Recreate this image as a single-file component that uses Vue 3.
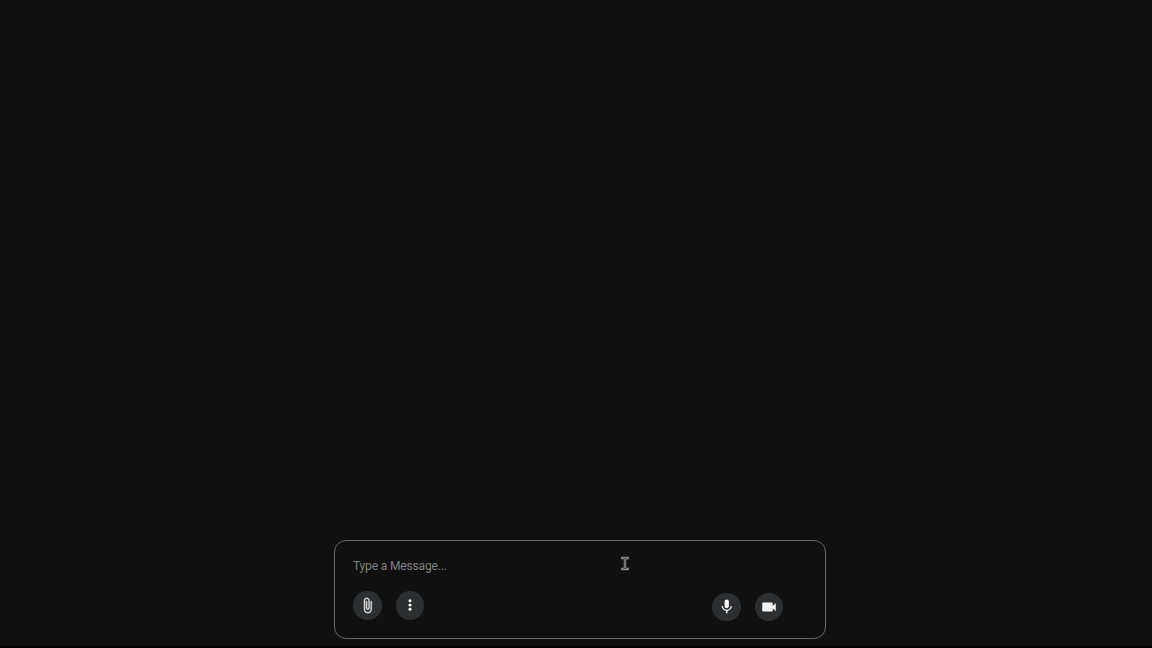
<script setup>
import { ref } from "vue";
const message = ref("");
</script>

<template>
  <div class="page">
    <main class="chat"></main>
    <div class="composer">
      <input
        v-model="message"
        class="message"
        type="text"
        placeholder="Type a Message..."
      />
      <div class="actions">
        <div class="group">
          <button class="iconbtn" aria-label="Attach file">
            <svg class="clip" viewBox="0 0 24 24">
              <path
                d="M16.5 6v11.5c0 2.21-1.79 4-4 4s-4-1.79-4-4V5c0-1.38 1.12-2.5 2.5-2.5s2.5 1.12 2.5 2.5v10.5c0 .55-.45 1-1 1s-1-.45-1-1V6H10v9.5c0 1.38 1.12 2.5 2.5 2.5s2.5-1.12 2.5-2.5V5c0-2.21-1.79-4-4-4S7 2.79 7 5v12.5c0 3.04 2.46 5.5 5.5 5.5s5.5-2.46 5.5-5.5V6h-1.5z"
              />
            </svg>
          </button>
          <button class="iconbtn" aria-label="More">
            <svg viewBox="0 0 24 24">
              <circle cx="12" cy="5.6" r="2.3" />
              <circle cx="12" cy="12" r="2.3" />
              <circle cx="12" cy="18.4" r="2.3" />
            </svg>
          </button>
        </div>
        <div class="group media">
          <button class="iconbtn" aria-label="Record voice">
            <svg class="mic" viewBox="0 0 24 24">
              <path
                d="M12 14c1.66 0 3-1.34 3-3V5c0-1.66-1.34-3-3-3S9 3.34 9 5v6c0 1.66 1.34 3 3 3zm5.3-3c0 3-2.54 5.1-5.3 5.1S6.7 14 6.7 11H5c0 3.41 2.72 6.23 6 6.72V21h2v-3.28c3.28-.48 6-3.3 6-6.72h-1.7z"
              />
            </svg>
          </button>
          <button class="iconbtn" aria-label="Record video">
            <svg class="video" viewBox="0 0 24 24">
              <path
                d="M17 10.5V7c0-.55-.45-1-1-1H4c-.55 0-1 .45-1 1v10c0 .55.45 1 1 1h12c.55 0 1-.45 1-1v-3.5l4 4v-11l-4 4z"
              />
            </svg>
          </button>
        </div>
      </div>
      <svg class="cursor" viewBox="0 0 10 15">
        <path class="outline" d="M2.5 2h1.5l1 .8 1-.8h1.5M5 2.8v9.4M2.5 13h1.5l1-.8 1 .8h1.5" />
        <path class="beam" d="M2.5 2h1.5l1 .8 1-.8h1.5M5 2.8v9.4M2.5 13h1.5l1-.8 1 .8h1.5" />
      </svg>
    </div>
  </div>
</template>

<style>
body {
  margin: 0;
  background-color: #101010;
}
</style>

<style scoped>
.page {
  box-sizing: border-box;
  height: 100vh;
  display: flex;
  flex-direction: column;
  align-items: center;
  padding: 0 0 7px 8px;
  background-color: #101010;
  border-bottom: 2px solid #000;
  font-family: Roboto, "Liberation Sans", sans-serif;
}
.chat {
  flex: 1;
}
.composer {
  position: relative;
  box-sizing: border-box;
  width: 492px;
  height: 99px;
  padding: 15px 42px 0 18px;
  border: 1px solid #6b6b6b;
  border-radius: 12px;
}
.message {
  display: block;
  width: 100%;
  height: 20px;
  padding: 0;
  border: none;
  outline: none;
  background: none;
  color: #e3e3e3;
  font-family: inherit;
  font-size: 12px;
  letter-spacing: -0.15px;
}
.message::placeholder {
  color: #808080;
  opacity: 1;
}
.actions {
  display: flex;
  justify-content: space-between;
  margin-top: 15px;
}
.group {
  display: flex;
  gap: 14px;
}
.media {
  padding-top: 1.5px;
}
.iconbtn {
  display: flex;
  align-items: center;
  justify-content: center;
  width: 28.5px;
  height: 28.5px;
  padding: 0;
  border: none;
  border-radius: 50%;
  background-color: #2d2e2f;
}
.iconbtn svg {
  flex: none;
  width: 16px;
  height: 16px;
  fill: #f5f5f5;
}
.iconbtn .clip {
  width: 17px;
  height: 17px;
  fill: #dedede;
  stroke: #dedede;
  stroke-width: 0.5;
}
.iconbtn .mic {
  width: 17.5px;
  height: 17.5px;
}
.iconbtn .video {
  width: 18px;
  height: 18px;
}
.cursor {
  position: absolute;
  left: 285px;
  top: 15px;
  width: 10px;
  height: 15px;
  fill: none;
}
.cursor .outline {
  stroke: #a5a5a5;
  stroke-width: 2.4;
  stroke-linecap: square;
}
.cursor .beam {
  stroke: #3a3a3a;
  stroke-width: 0.9;
}
</style>
